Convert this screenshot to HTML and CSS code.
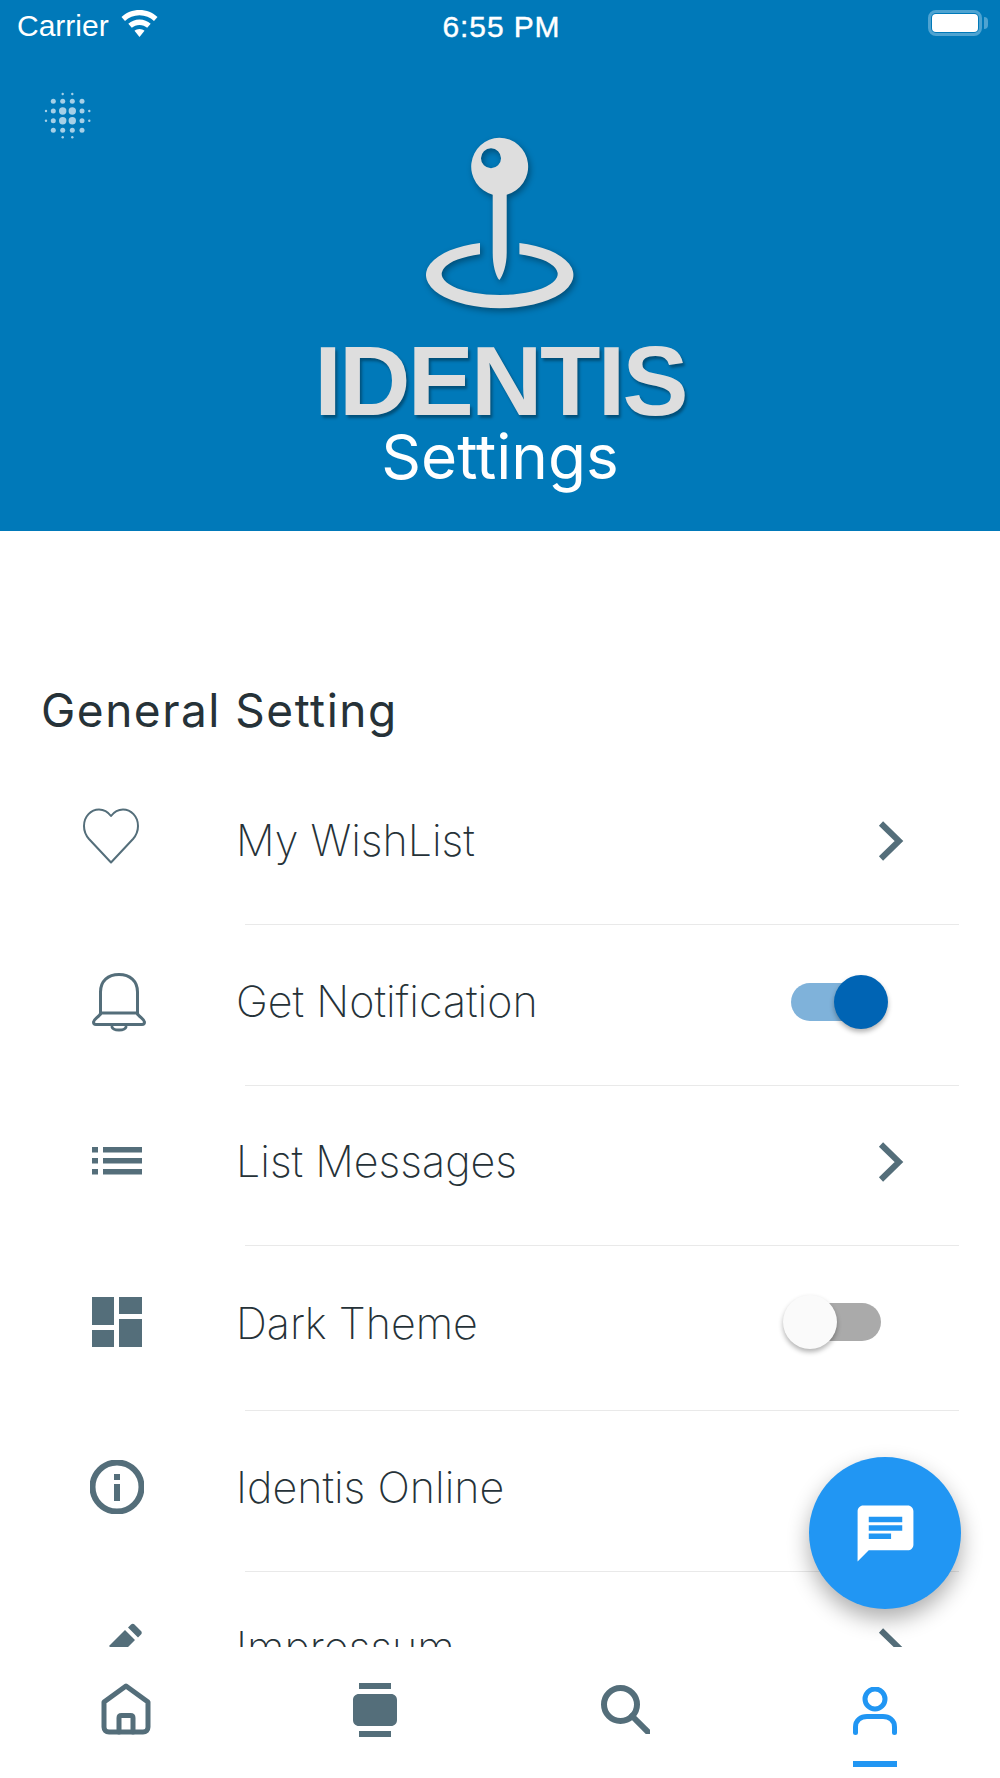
FILE: index.html
```html
<!DOCTYPE html>
<html lang="en">
<head>
<meta charset="utf-8">
<title>Identis Settings</title>
<link rel="stylesheet" href="styles.css">
</head>
<body>
<div class="phone">
  <header class="header">
    <div class="statusbar">
      <div class="status-left">
        <span class="carrier">Carrier</span>
        <svg class="wifi" viewBox="0 0 37 27"><path d="M18.5 0C11.5 0 5.2 2.6 0.5 7L4 11C7.8 7.4 12.9 5.3 18.5 5.3S29.2 7.4 33 11L36.500 7C31.800 2.600 25.500 0 18.500 0Z"/><path d="M18.5 9.500C14.200 9.500 10.300 11.100 7.300 13.800L10.800 17.800C12.800 16 15.500 14.900 18.500 14.900S24.200 16 26.200 17.800L29.700 13.800C26.700 11.100 22.800 9.500 18.500 9.500Z"/><path d="M18.500 19C16.600 19 14.900 19.700 13.500 20.800L18.500 27L23.500 20.800C22.100 19.700 20.400 19 18.500 19Z"/></svg>
      </div>
      <span class="time">6:55 PM</span>
      <div class="battery"><span class="battery-fill"></span></div>
    </div>
    <svg class="fractal" viewBox="44 92 48 48">
      <g class="dot-s"><circle cx="62.700" cy="94" r="1.200"/><circle cx="72.300" cy="94" r="1.200"/><circle cx="62.700" cy="137.300" r="1.200"/><circle cx="72.300" cy="137.300" r="1.200"/><circle cx="46" cy="111" r="1.200"/><circle cx="46" cy="120.700" r="1.200"/><circle cx="89.300" cy="111" r="1.200"/><circle cx="89.300" cy="120.700" r="1.200"/></g>
      <g class="dot-m"><circle cx="53.300" cy="101.300" r="2.500"/><circle cx="62.700" cy="101.300" r="2.500"/><circle cx="72.300" cy="101.300" r="2.500"/><circle cx="82" cy="101.300" r="2.500"/><circle cx="53.300" cy="130.300" r="2.500"/><circle cx="62.700" cy="130.300" r="2.500"/><circle cx="72.300" cy="130.300" r="2.500"/><circle cx="82" cy="130.300" r="2.500"/><circle cx="53.300" cy="111" r="2.500"/><circle cx="82" cy="111" r="2.500"/><circle cx="53.300" cy="120.700" r="2.500"/><circle cx="82" cy="120.700" r="2.500"/></g>
      <g class="dot-l"><circle cx="62.700" cy="111" r="3.700"/><circle cx="72.300" cy="111" r="3.700"/><circle cx="62.700" cy="120.700" r="3.700"/><circle cx="72.300" cy="120.700" r="3.700"/></g>
    </svg>
    <div class="brand">
      <svg class="pin" viewBox="420 130 160 185">
        <path fill-rule="evenodd" d="M499.300 137.700a29 29 0 0 1 7.400 57V253C506.700 265 503 276 499.300 280C495.600 276 492.700 265 492.700 253V194.700a29 29 0 0 1 6.600-57ZM491 148.300a10 10 0 1 0 0 20a10 10 0 1 0 0-20Z"/>
        <path d="M480 242.900A73.700 33.300 0 1 0 519.400 242.900L519.400 254.250A58 21 0 1 1 480 254.250Z"/>
      </svg>
      <div class="brand-name">IDENTIS</div>
      <div class="brand-sub">Settings</div>
    </div>
  </header>

  <main class="content">
    <h2 class="section-title">General Setting</h2>

    <div class="row">
      <span class="row-icon"><svg class="ico ico-heart" viewBox="0 0 56 56"><path class="line thin" d="M28 54.500L6 31C2.500 27 1 23 1 18C1 8.500 8 1.500 16 1.500C20.500 1.500 25 4 28 8C31 4 35.500 1.500 40 1.500C48 1.500 55 8.500 55 18C55 23 53.500 27 50 31Z"/></svg></span>
      <span class="row-label">My WishList</span>
      <svg class="chev" viewBox="0 0 26 40"><path d="M3 2.500L21 20L3 37.500"/></svg>
    </div>
    <div class="sep"></div>

    <div class="row">
      <span class="row-icon"><svg class="ico ico-bell" viewBox="0 0 54 60"><path class="line" d="M8.500 41V19C8.500 8 16 1.500 27 1.500S45.500 8 45.500 19V41"/><path class="line" d="M9 40C7 44 2 46 1.500 49C1.500 50.500 2.500 51.500 4 51.500H50C51.500 51.500 52.500 50.500 52.500 49C52 46 47 44 45 40Z"/><path class="line" d="M20 54C21 58 33 58 34 54"/></svg></span>
      <span class="row-label">Get Notification</span>
      <div class="switch switch-on"><span class="knob"></span></div>
    </div>
    <div class="sep"></div>

    <div class="row">
      <span class="row-icon"><svg class="ico ico-list" viewBox="0 0 50 28"><path class="fill" d="M0 0H6V5.500H0ZM11 0H50V5.500H11ZM0 11H6V16.500H0ZM11 11H50V16.500H11ZM0 22H6V27.500H0ZM11 22H50V27.500H11Z"/></svg></span>
      <span class="row-label">List Messages</span>
      <svg class="chev" viewBox="0 0 26 40"><path d="M3 2.500L21 20L3 37.500"/></svg>
    </div>
    <div class="sep"></div>

    <div class="row row-tall">
      <span class="row-icon"><svg class="ico ico-dash" viewBox="0 0 50 50"><path class="fill" d="M0 0H22V28H0ZM0 33H22V50H0ZM27 0H50V17H27ZM27 22H50V50H27Z"/></svg></span>
      <span class="row-label">Dark Theme</span>
      <div class="switch switch-off"><span class="knob"></span></div>
    </div>
    <div class="sep"></div>

    <div class="row">
      <span class="row-icon"><svg class="ico ico-info" viewBox="0 0 54 54"><circle class="line heavy" cx="27" cy="27" r="24.500"/><path class="fill" d="M24 14H30V20H24ZM24 24H30V41H24Z"/></svg></span>
      <span class="row-label">Identis Online</span>
    </div>
    <div class="sep"></div>

    <div class="row">
      <span class="row-icon"><svg class="ico ico-pen" viewBox="0 0 33 46"><path class="fill" d="M0 23L16 7L26 17L10 33ZM19 4.500L22 1.500C23 .5 24.500 .5 25.500 1.500L32 8C33 9 33 10.500 32 11.500L29 14.500Z"/></svg></span>
      <span class="row-label">Impressum</span>
      <svg class="chev" viewBox="0 0 26 40"><path d="M3 2.500L21 20L3 37.500"/></svg>
    </div>
  </main>

  <button class="fab" type="button" aria-label="Chat">
    <svg class="fab-icon" viewBox="0 0 24 24"><path d="M20 2H4c-1.100 0-1.990.9-1.990 2L2 22l4-4h14c1.100 0 2-.9 2-2V4c0-1.100-.9-2-2-2zM6 9h12v2H6V9zm8 5H6v-2h8v2zm4-6H6V6h12v2z"/></svg>
  </button>

  <nav class="tabbar">
    <div class="tab"><svg class="tab-icon tab-home" viewBox="0 0 50 52"><path class="line medium" d="M25 3L3 19V44C3 47 5 49 8 49H42C45 49 47 47 47 44V19Z"/><path class="line medium" d="M18 49V35C18 33.500 19 32.500 20.500 32.500H29.500C31 32.500 32 33.500 32 35V49"/></svg></div>
    <div class="tab"><svg class="tab-icon tab-watch" viewBox="0 0 44 54"><path class="fill" d="M6 0H38V6H6ZM6 48H38V54H6ZM6 11H38C41.500 11 44 13.500 44 17V37C44 40.500 41.500 43 38 43H6C2.500 43 0 40.500 0 37V17C0 13.500 2.500 11 6 11Z"/></svg></div>
    <div class="tab"><svg class="tab-icon tab-search" viewBox="0 0 49 49"><circle class="line heavy" cx="19.500" cy="19.500" r="16.500"/><path class="line heavy" d="M31 31L47 47"/></svg></div>
    <div class="tab tab-active">
      <svg class="tab-icon tab-user" viewBox="0 0 44 48"><circle class="line medium" cx="22" cy="12" r="10"/><path class="line medium" d="M2.500 45.500V40C2.500 33 8 29.500 14 29.500H30C36 29.500 41.500 33 41.500 40V45.500"/></svg>
      <span class="tab-bar"></span>
    </div>
  </nav>
</div>
</body>
</html>
```
FILE: styles.css
```css
* { box-sizing: border-box; }
html, body { margin: 0; padding: 0; background: #fff; }
.phone {
  position: relative;
  width: 1000px;
  height: 1778px;
  overflow: hidden;
  display: flex;
  flex-direction: column;
  background: #fff;
  font-family: "Inter", "Liberation Sans", sans-serif;
}

/* header */
.header {
  height: 531px;
  flex: none;
  background: #0079b9;
  display: flex;
  flex-direction: column;
  position: relative;
}
.statusbar {
  height: 50px;
  flex: none;
  display: grid;
  grid-template-columns: 1fr auto 1fr;
  align-items: center;
  padding: 0 14px 0 17px;
  color: #fff;
  font-family: "Liberation Sans", sans-serif;
  font-size: 30px;
}
.status-left { display: flex; align-items: center; gap: 12px; }
.carrier { line-height: 40px; padding-top: 2px; }
.wifi { width: 37px; height: 27px; fill: #fff; margin-top: -4px; }
.time { font-weight: 400; letter-spacing: .9px; line-height: 40px; padding-top: 3px; -webkit-text-stroke: .4px #fff; }
.battery {
  justify-self: end;
  width: 54px;
  height: 26px;
  margin-right: 4px;
  border: 3px solid #4ea3d1;
  border-radius: 8px;
  padding: 1px;
  position: relative;
  margin-top: -4px;
}
.battery::after {
  content: "";
  position: absolute;
  right: -9px;
  top: 4px;
  width: 4px;
  height: 12px;
  border-radius: 0 4px 4px 0;
  background: #4ea3d1;
}
.battery-fill { display: block; height: 100%; background: #fff; border-radius: 4px; }
.fractal {
  position: absolute;
  left: 44px;
  top: 92px;
  width: 48px;
  height: 48px;
  fill: #a6d0e7;
}
.brand {
  display: flex;
  flex-direction: column;
  align-items: center;
  padding-top: 80px;
}
.pin {
  width: 160px;
  height: 185px;
  fill: #dedede;
  filter: drop-shadow(2px 3px 3px rgba(0,0,0,.35));
}
.brand-name {
  margin-top: 22px;
  font-family: "Liberation Sans", sans-serif;
  font-weight: 700;
  font-size: 99px;
  line-height: 88px;
  letter-spacing: -2.7px;
  color: #dedede;
  text-shadow: 2px 3px 3px rgba(0,0,0,.35);
}
.brand-sub {
  font-size: 62px;
  line-height: 64px;
  color: #fff;
}

/* list */
.content {
  flex: 1;
  min-height: 0;
  overflow: hidden;
  padding-top: 141px;
}
.section-title {
  margin: 0;
  padding: 10px 0 0 41px;
  height: 92.5px;
  font-size: 46px;
  line-height: 56px;
  font-weight: 400;
  letter-spacing: 1.5px;
  color: #263238;
}
.row {
  height: 159.5px;
  display: flex;
  align-items: center;
  padding-right: 97px;
}
.row-tall { height: 164px; }
.row-icon {
  width: 236px;
  flex: none;
  position: relative;
  display: flex;
}
.row-label {
  flex: 1;
  font-size: 43px;
  font-weight: 220;
  line-height: 56px;
  color: #263238;
  margin-top: -8px;
}
.row-tall .row-label { margin-top: -10px; }
.sep {
  height: 1px;
  margin: 0 41px 0 245px;
  background: #e9e9e9;
}
.ico { display: block; }
.ico-heart { width: 56px; height: 56px; margin: -16px 0 0 83px; }
.ico-bell { width: 54px; height: 60px; margin: -3px 0 0 92px; }
.ico-list { width: 50px; height: 28px; margin: -8px 0 0 92px; }
.ico-dash { width: 50px; height: 50px; margin: -13px 0 0 92px; }
.ico-info { width: 54px; height: 54px; margin: -8px 0 0 90px; }
.ico-pen { width: 33px; height: 46px; margin: -10px 0 0 109px; }
.line { fill: none; stroke: #546e7a; stroke-width: 3; stroke-linecap: round; stroke-linejoin: round; }
.line.thin { stroke-width: 2; }
.line.medium { stroke-width: 5; }
.line.heavy { stroke-width: 6; }
.fill { fill: #546e7a; }
.chev { width: 26px; height: 40px; fill: none; stroke: #546e7a; stroke-width: 6; flex: none; margin: -6px -1px 0 0; }

.switch { position: relative; width: 90px; height: 38px; border-radius: 19px; flex: none; margin-right: 22px; }
.knob { position: absolute; top: -8px; width: 54px; height: 54px; border-radius: 50%; box-shadow: 0 3px 5px rgba(0,0,0,.3); }
.switch-on { background: #7fb2da; margin-top: -6px; }
.switch-on .knob { right: -7px; background: #0064b4; }
.switch-off { background: #aaa; margin-top: -13px; }
.switch-off .knob { left: -8px; background: #fafafa; }

/* fab */
.fab {
  position: absolute;
  left: 809px;
  top: 1457px;
  width: 152px;
  height: 152px;
  padding: 0;
  border: 0;
  border-radius: 50%;
  background: #2196f3;
  box-shadow: 0 10px 22px rgba(0,0,0,.32);
  display: flex;
  align-items: center;
  justify-content: center;
}
.fab-icon { width: 67px; height: 67px; fill: #fff; }

/* tabs */
.tabbar {
  height: 131px;
  flex: none;
  background: #fff;
  display: grid;
  grid-template-columns: repeat(4, 1fr);
  position: relative;
}
.tab { position: relative; display: flex; justify-content: center; }
.tab-icon { display: block; }
.tab-home { width: 50px; height: 52px; margin: 36px 0 0 2px; }
.tab-watch { width: 44px; height: 54px; margin: 36px 0 0 0; }
.tab-search { width: 49px; height: 49px; margin: 38px 0 0 0; }
.tab-user { width: 44px; height: 48px; margin: 40px 0 0 0; stroke: #2196f3; }
.tab-active .line { stroke: #2196f3; }
.tab-bar { position: absolute; left: 103px; top: 114px; width: 44px; height: 6px; background: #2196f3; }
```
